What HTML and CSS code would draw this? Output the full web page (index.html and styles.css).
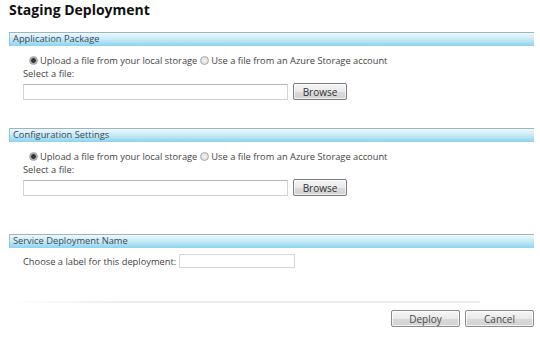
FILE: index.html
```html
<!DOCTYPE html>
<html lang="en">
<head>
    <meta charset="UTF-8">
    <title>Staging Deployment</title>
    <link rel="stylesheet" href="styles.css">
</head>
<body>
    <div class="page">
        <h1 class="title">Staging Deployment</h1>

        <!-- Application Package -->
        <div class="group group-first">
            <div class="group-head">Application Package</div>
            <div class="group-body">
                <div class="radios">
                    <label><input type="radio" name="pkg" checked> Upload a file from your local storage</label>
                    <label><input type="radio" name="pkg"> Use a file from an Azure Storage account</label>
                </div>
                <div class="field-label">Select a file:</div>
                <div class="file-row">
                    <input type="text" class="file-input">
                    <button class="btn btn-browse">Browse</button>
                </div>
            </div>
        </div>

        <!-- Configuration Settings -->
        <div class="group">
            <div class="group-head">Configuration Settings</div>
            <div class="group-body">
                <div class="radios">
                    <label><input type="radio" name="cfg" checked> Upload a file from your local storage</label>
                    <label><input type="radio" name="cfg"> Use a file from an Azure Storage account</label>
                </div>
                <div class="field-label">Select a file:</div>
                <div class="file-row">
                    <input type="text" class="file-input">
                    <button class="btn btn-browse">Browse</button>
                </div>
            </div>
        </div>

        <!-- Service Deployment Name -->
        <div class="group group-name">
            <div class="group-head">Service Deployment Name</div>
            <div class="group-body">
                <div class="name-row">
                    <span>Choose a label for this deployment:</span>
                    <input type="text" class="name-input">
                </div>
            </div>
        </div>

        <div class="separator"></div>

        <div class="actions">
            <button class="btn btn-action">Deploy</button>
            <button class="btn btn-action">Cancel</button>
        </div>
    </div>
</body>
</html>
```

FILE: styles.css
```css
* {
    margin: 0;
    padding: 0;
    box-sizing: border-box;
    font-family: "Open Sans", "DejaVu Sans", sans-serif;
}

body {
    background: white;
    color: #444;
    font-size: 9.3px;
}

.page {
    padding: 2px 6px 0 9px;
}

.title {
    font-size: 14px;
    font-weight: bold;
    color: #111;
    line-height: 16px;
}

/* Section blocks */
.group {
    margin-top: 28px;
}

.group-first {
    margin-top: 14px;
}

.group-name {
    margin-top: 38px;
}

.group-head {
    height: 14px;
    line-height: 12px;
    padding-left: 3px;
    color: #3a4a58;
    border-top: 1px solid #9fb4bf;
    border-left: 1px solid #8fc6d8;
    background: linear-gradient(to bottom, #eef8fc 0%, #c9ebf7 45%, #8dd3ee 100%);
}

.group-body {
    padding-left: 14px;
}

.radios {
    display: flex;
    align-items: center;
    gap: 3px;
    margin-top: 7px;
    padding-left: 6px;
    height: 14px;
}

.radios label {
    display: flex;
    align-items: center;
    gap: 2px;
}

.radios input {
    appearance: none;
    width: 9px;
    height: 9px;
    border-radius: 50%;
    border: 1px solid #a8a8a8;
    background: radial-gradient(circle, #f4f4f4 0%, #d8d8d8 100%);
}

.radios input:checked {
    background: radial-gradient(circle, #333 0 2px, #9a9a9a 2.5px, #e0e0e0 100%);
}

.field-label {
    line-height: 14px;
}

.file-row {
    display: flex;
    align-items: center;
    gap: 5px;
    margin-top: 2px;
}

.file-input {
    width: 265px;
    height: 16px;
    border: 1px solid #cfd4d8;
    border-top-color: #b4b9bd;
    background: white;
}

.btn {
    font-size: 10px;
    color: #333;
    border: 1px solid #7c7c7c;
    border-radius: 2px;
    background: linear-gradient(to bottom, #f6f6f6 0%, #e9e9e9 50%, #dadada 51%, #d2d2d2 100%);
    box-shadow: inset 0 0 0 1px rgba(255, 255, 255, 0.7);
}

.btn-browse {
    width: 54px;
    height: 17px;
}

.btn-action {
    width: 69px;
    height: 17px;
    color: #4a4a4a;
    border-color: #8c8c8c;
}

.name-row {
    display: flex;
    align-items: center;
    gap: 3px;
    margin-top: 6px;
}

.name-input {
    width: 116px;
    height: 14px;
    border: 1px solid #d4d8dc;
    background: white;
}

.separator {
    margin: 33px 0 0 3px;
    width: 468px;
    height: 2px;
    background: linear-gradient(to right, rgba(230, 230, 230, 0) 0%, #ececec 25%, #ececec 100%);
}

.actions {
    display: flex;
    justify-content: flex-end;
    gap: 5px;
    margin-top: 7px;
}
```
